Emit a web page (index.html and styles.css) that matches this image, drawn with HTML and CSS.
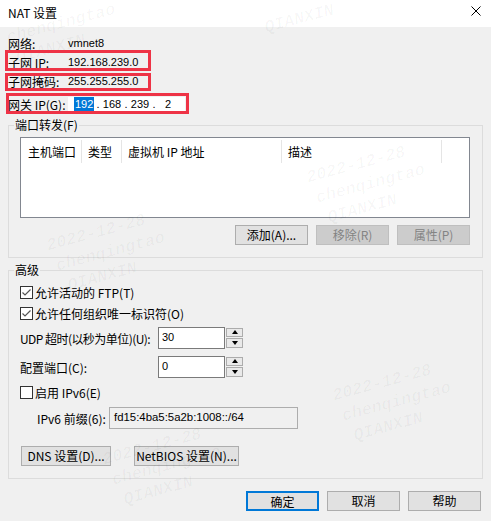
FILE: index.html
```html
<!DOCTYPE html>
<html>
<head>
    <title>NAT 设置</title>
    <link rel="stylesheet" href="styles.css">
</head>
<body>
<div class="window">
    <div class="titlebar">
        <span class="title">NAT 设置</span>
        <svg class="close" width="10" height="10" viewBox="0 0 10 10"><path d="M0.5 0.5L9.5 9.5M9.5 0.5L0.5 9.5" stroke="#000" stroke-width="1"/></svg>
    </div>

    <div class="body">
        <div class="info-row first"><span class="label">网络:</span><span class="value">vmnet8</span></div>
        <div class="info-row"><span class="label">子网 IP:</span><span class="value">192.168.239.0</span></div>
        <div class="info-row"><span class="label">子网掩码:</span><span class="value">255.255.255.0</span></div>
        <div class="info-row gateway">
            <span class="label">网关 IP(G):</span>
            <div class="ip-field">
                <span class="oct"><span class="selected">192</span></span><span class="dot">.</span>
                <span class="oct">168</span><span class="dot">.</span>
                <span class="oct">239</span><span class="dot">.</span>
                <span class="oct">2</span>
            </div>
        </div>

        <fieldset class="group forward">
            <legend>端口转发(F)</legend>
            <div class="list">
                <div class="list-head">
                    <div class="col c1">主机端口</div>
                    <div class="col c2">类型</div>
                    <div class="col c3">虚拟机 IP 地址</div>
                    <div class="col c4">描述</div>
                </div>
            </div>
            <div class="btn-row">
                <button class="btn">添加(A)...</button>
                <button class="btn" disabled>移除(R)</button>
                <button class="btn" disabled>属性(P)</button>
            </div>
        </fieldset>

        <fieldset class="group advanced">
            <legend>高级</legend>
            <div class="check-row">
                <svg class="box" width="13" height="13" viewBox="0 0 13 13"><rect x="0.5" y="0.5" width="12" height="12" fill="#fff" stroke="#333"/><path d="M2.5 6.5L5 9L10.5 3.5" fill="none" stroke="#555" stroke-width="1.2"/></svg>
                <span>允许活动的 FTP(T)</span>
            </div>
            <div class="check-row">
                <svg class="box" width="13" height="13" viewBox="0 0 13 13"><rect x="0.5" y="0.5" width="12" height="12" fill="#fff" stroke="#333"/><path d="M2.5 6.5L5 9L10.5 3.5" fill="none" stroke="#555" stroke-width="1.2"/></svg>
                <span>允许任何组织唯一标识符(O)</span>
            </div>
            <div class="field-row udp">
                <span class="field-label tight">UDP 超时(以秒为单位)(U):</span>
                <div class="edit">30</div>
                <div class="spin">
                    <div class="spin-btn"><span class="arrow up"></span></div>
                    <div class="spin-btn"><span class="arrow down"></span></div>
                </div>
            </div>
            <div class="field-row port">
                <span class="field-label">配置端口(C):</span>
                <div class="edit">0</div>
                <div class="spin">
                    <div class="spin-btn"><span class="arrow up"></span></div>
                    <div class="spin-btn"><span class="arrow down"></span></div>
                </div>
            </div>
            <div class="check-row ipv6">
                <svg class="box" width="13" height="13" viewBox="0 0 13 13"><rect x="0.5" y="0.5" width="12" height="12" fill="#fff" stroke="#333"/></svg>
                <span>启用 IPv6(E)</span>
            </div>
            <div class="field-row prefix">
                <span class="prefix-label">IPv6 前缀(6):</span>
                <div class="edit readonly">fd15:4ba5:5a2b:1008::/64</div>
            </div>
            <div class="dns-row">
                <button class="btn dns">DNS 设置(D)...</button>
                <button class="btn netbios">NetBIOS 设置(N)...</button>
            </div>
        </fieldset>

        <div class="footer">
            <button class="btn default">确定</button>
            <button class="btn">取消</button>
            <button class="btn">帮助</button>
        </div>
    </div>

    <div class="mark" style="left: 4px; top: 28px;"><div>chenqingtao</div><div>QIANXIN</div></div>
    <div class="mark" style="left: 262px; top: 18px;"><div>QIANXIN</div></div>
    <div class="mark" style="left: 304px; top: 168px;"><div>2022-12-28</div><div>chenqingtao</div><div>QIANXIN</div></div>
    <div class="mark" style="left: 44px; top: 236px;"><div>2022-12-28</div><div>chenqingtao</div><div>QIANXIN</div></div>
    <div class="mark" style="left: 330px; top: 386px;"><div>2022-12-28</div><div>chenqingtao</div><div>QIANXIN</div></div>
    <div class="mark" style="left: 100px; top: 450px;"><div>2022-12-28</div><div>chenqingtao</div><div>QIANXIN</div></div>

    <div class="annot a1"></div>
    <div class="annot a2"></div>
    <div class="annot a3"></div>
</div>
</body>
</html>
```

FILE: styles.css
```css
body {
    margin: 0;
    font-family: "Noto Sans CJK SC", sans-serif;
    font-size: 12px;
    color: #000;
    background-color: #f0f0f0;
}
.window {
    position: relative;
    width: 491px;
    height: 521px;
    overflow: hidden;
    background-color: #f0f0f0;
}
.titlebar {
    height: 27px;
    background-color: #fff;
    display: flex;
    align-items: center;
    justify-content: space-between;
    padding: 0 10px 0 8px;
    box-sizing: border-box;
}
.title {
    line-height: 16px;
    margin-top: -2px;
}
.close {
    margin-top: -5px;
}
.body {
    padding: 0 8px;
}
.info-row {
    display: flex;
    height: 19px;
    line-height: 19px;
}
.info-row.first {
    margin-top: 7px;
}
.label {
    width: 60px;
    flex-shrink: 0;
}
.value {
    font-family: "Liberation Sans", sans-serif;
    font-size: 11px;
}
.gateway {
    height: 18px;
    margin-top: 4px;
    align-items: center;
}
.ip-field {
    display: flex;
    width: 117px;
    height: 14px;
    line-height: 14px;
    padding-left: 6px;
    box-sizing: border-box;
    background-color: #fff;
    font-family: "Liberation Sans", sans-serif;
    font-size: 11px;
}
.oct {
    width: 20px;
    text-align: center;
}
.dot {
    width: 8px;
    text-align: center;
}
.selected {
    display: inline-block;
    height: 14px;
    padding: 0 1px;
    background-color: #0078d7;
    color: #fff;
}
.group {
    margin: 4px 0 0;
    padding: 4px 12px 12px 11px;
    border: 1px solid #dcdcdc;
    min-width: 0;
}
.group legend {
    margin-left: -6px;
    padding: 0 1px;
    line-height: 16px;
}
.list {
    height: 81px;
    border: 1px solid #828790;
    background-color: #fff;
    box-sizing: border-box;
}
.list-head {
    display: flex;
    padding-top: 2px;
}
.col {
    height: 23px;
    line-height: 23px;
    padding-left: 6px;
    border-right: 1px solid #e5e5e5;
    box-sizing: border-box;
}
.c1 {
    width: 61px;
    padding-left: 7px;
}
.c2 {
    width: 40px;
}
.c3 {
    width: 160px;
}
.c4 {
    width: 160px;
}
.btn-row {
    display: flex;
    justify-content: flex-end;
    gap: 8px;
    margin-top: 7px;
}
.btn {
    width: 73px;
    height: 20px;
    padding: 0;
    font: inherit;
    line-height: 18px;
    color: #000;
    background-color: #e1e1e1;
    border: 1px solid #adadad;
}
.btn:disabled {
    color: #838383;
    background-color: #cccccc;
    border-color: #bfbfbf;
}
.btn.default {
    border: 2px solid #0078d7;
}
.check-row {
    display: flex;
    align-items: center;
    height: 21px;
    line-height: 21px;
}
.check-row .box {
    margin-right: 2px;
    margin-top: -1px;
}
.field-row {
    display: flex;
    align-items: center;
    height: 22px;
}
.udp {
    margin-top: 3px;
}
.port {
    margin-top: 7px;
}
.ipv6 {
    margin-top: 4px;
}
.prefix {
    margin-top: 4px;
}
.field-label {
    width: 138px;
    flex-shrink: 0;
    white-space: nowrap;
}
.field-label.tight {
    letter-spacing: -0.55px;
}
.prefix-label {
    width: 72px;
    flex-shrink: 0;
    padding-left: 17px;
    white-space: nowrap;
}
.edit {
    width: 67px;
    height: 22px;
    line-height: 18px;
    padding: 0 3px;
    flex-shrink: 0;
    border: 1px solid #7a7a7a;
    background-color: #fff;
    box-sizing: border-box;
    font-family: "Liberation Sans", sans-serif;
    font-size: 11px;
}
.edit.readonly {
    width: 189px;
    padding-left: 4px;
    line-height: 19px;
    border-color: #adadad;
    background-color: #f0f0f0;
    font-size: 11.4px;
}
.spin {
    display: flex;
    flex-direction: column;
    margin-left: 1px;
    height: 21px;
}
.spin-btn {
    width: 17px;
    height: 10px;
    margin-bottom: 1px;
    border: 1px solid #acacac;
    background-color: #e9e9e9;
    box-sizing: border-box;
    display: flex;
    align-items: center;
    justify-content: center;
}
.arrow {
    width: 0;
    height: 0;
    border-left: 3.5px solid transparent;
    border-right: 3.5px solid transparent;
}
.arrow.up {
    border-bottom: 4px solid #000;
}
.arrow.down {
    border-top: 4px solid #000;
}
.dns-row {
    display: flex;
    gap: 23px;
    margin-top: 17px;
    padding-left: 1px;
}
.btn.dns {
    width: 90px;
}
.btn.netbios {
    width: 105px;
}
.footer {
    display: flex;
    justify-content: flex-end;
    gap: 8px;
    margin-top: 12px;
    padding-right: 2px;
}
.mark {
    position: absolute;
    transform: rotate(-15deg);
    transform-origin: left top;
    font-family: "Liberation Mono", monospace;
    font-size: 17px;
    font-weight: bold;
    font-style: italic;
    line-height: 22px;
    color: rgba(0, 0, 0, 0.03);
    pointer-events: none;
}
.mark div:nth-child(2) {
    padding-left: 4px;
}
.mark div:nth-child(3) {
    padding-left: 10px;
}
.annot {
    position: absolute;
    border: 3px solid #ee3346;
    box-sizing: border-box;
}
.a1 {
    left: 5px;
    top: 50px;
    width: 146px;
    height: 21px;
}
.a2 {
    left: 5px;
    top: 73px;
    width: 146px;
    height: 18px;
}
.a3 {
    left: 6px;
    top: 93px;
    width: 183px;
    height: 21px;
}
```
